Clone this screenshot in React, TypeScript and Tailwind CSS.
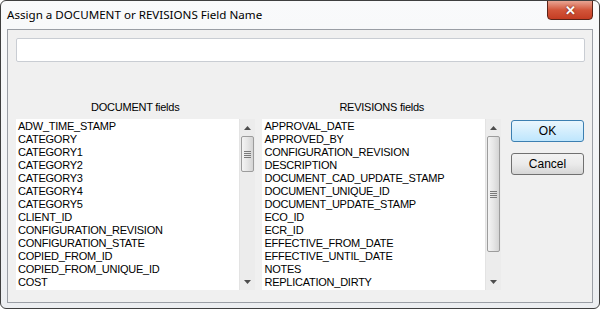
import React from 'react'

const docFields = [
  'ADW_TIME_STAMP',
  'CATEGORY',
  'CATEGORY1',
  'CATEGORY2',
  'CATEGORY3',
  'CATEGORY4',
  'CATEGORY5',
  'CLIENT_ID',
  'CONFIGURATION_REVISION',
  'CONFIGURATION_STATE',
  'COPIED_FROM_ID',
  'COPIED_FROM_UNIQUE_ID',
  'COST',
]

const revFields = [
  'APPROVAL_DATE',
  'APPROVED_BY',
  'CONFIGURATION_REVISION',
  'DESCRIPTION',
  'DOCUMENT_CAD_UPDATE_STAMP',
  'DOCUMENT_UNIQUE_ID',
  'DOCUMENT_UPDATE_STAMP',
  'ECO_ID',
  'ECR_ID',
  'EFFECTIVE_FROM_DATE',
  'EFFECTIVE_UNTIL_DATE',
  'NOTES',
  'REPLICATION_DIRTY',
]

const ArrowUp = () => (
  <svg width="7" height="4" viewBox="0 0 7 4">
    <path d="M3.5 0 L7 4 L0 4 Z" fill="#4d4d4d" />
  </svg>
)

const ArrowDown = () => (
  <svg width="7" height="4" viewBox="0 0 7 4">
    <path d="M0 0 L7 0 L3.5 4 Z" fill="#4d4d4d" />
  </svg>
)

const ScrollBar = ({ thumbHeight }: { thumbHeight: number }) => (
  <div className="flex flex-col w-[16px] bg-[#ececec] border-l border-[#e3e3e3]">
    <div className="h-[17px] flex items-center justify-center">
      <ArrowUp />
    </div>
    <div className="flex-1 relative">
      <div
        className="absolute left-[1px] right-[1px] top-0 rounded-[2px] border border-[#9c9c9c] bg-gradient-to-r from-[#f4f4f4] via-[#e6e6e6] to-[#d4d4d4] flex flex-col items-center justify-center gap-[1px]"
        style={{ height: thumbHeight }}
      >
        <div className="w-[7px] h-[1px] bg-[#7a7a7a]" />
        <div className="w-[7px] h-[1px] bg-[#7a7a7a]" />
        <div className="w-[7px] h-[1px] bg-[#7a7a7a]" />
        <div className="w-[7px] h-[1px] bg-[#7a7a7a]" />
      </div>
    </div>
    <div className="h-[17px] flex items-center justify-center">
      <ArrowDown />
    </div>
  </div>
)

const FieldList = ({ title, items, thumbHeight }: { title: string; items: string[]; thumbHeight: number }) => (
  <div className="flex flex-col w-[240px]">
    <div className="h-[13px] leading-[13px] text-center text-[11px] tracking-[-0.25px] text-black mb-[5px]">{title}</div>
    <div className="flex h-[171px] bg-white">
      <div className="flex-1 pt-[1px] pl-[2px] overflow-hidden">
        {items.map(item => (
          <div key={item} className="h-[13px] leading-[13px] text-[11px] tracking-[-0.25px] text-black whitespace-nowrap">
            {item}
          </div>
        ))}
      </div>
      <ScrollBar thumbHeight={thumbHeight} />
    </div>
  </div>
)

export default function App() {
  return (
    <div
      className="w-[600px] h-[309px] rounded-[6px] border border-[#3f3f3f] bg-gradient-to-b from-[#f9fafb] to-[#eceef1] flex flex-col overflow-hidden"
      style={{ fontFamily: '"Liberation Sans", Arial, sans-serif' }}
    >
      <div className="h-[28px] flex items-start relative">
        <div
          className="pl-[6px] pt-[6px] text-[11.6px] leading-[16px] text-black"
          style={{ fontFamily: '"Noto Sans", "Open Sans", sans-serif' }}
        >
          Assign a DOCUMENT or REVISIONS Field Name
        </div>
        <div className="absolute right-[6px] top-[-1px] w-[46px] h-[20px] rounded-b-[4px] border border-[#5a2318] bg-gradient-to-b from-[#e8a493] via-[#d2553a] to-[#c43c22] flex items-center justify-center">
          <span className="text-white text-[13px] font-bold leading-none" style={{ textShadow: '0 0 2px #5a1a0c' }}>
            ✕
          </span>
        </div>
      </div>
      <div className="mx-[6px] mb-[5px] flex-1 border border-[#9a9ea5] bg-[#f0f0f0] px-[8px] pt-[8px]">
        <div className="h-[24px] w-[569px] bg-white border border-[#c9cdd3] rounded-[2px]" />
        <div className="flex mt-[39px]">
          <FieldList title="DOCUMENT fields" items={docFields} thumbHeight={36} />
          <div className="w-[8px]" />
          <FieldList title="REVISIONS fields" items={revFields} thumbHeight={116} />
          <div className="flex flex-col ml-[10px] mt-[19px] gap-[11px]">
            <button className="w-[73px] h-[22px] rounded-[3px] border border-[#3c7fb1] bg-gradient-to-b from-[#eaf6fd] to-[#bee6fd] text-[12px] leading-none text-black">
              OK
            </button>
            <button className="w-[73px] h-[22px] rounded-[3px] border border-[#707070] bg-gradient-to-b from-[#f2f2f2] via-[#ebebeb] to-[#d6d6d6] text-[12px] leading-none text-black">
              Cancel
            </button>
          </div>
        </div>
      </div>
    </div>
  )
}
